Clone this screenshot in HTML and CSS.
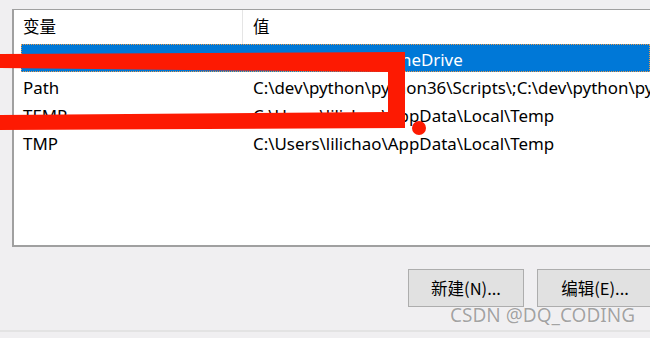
FILE: index.html
```html
<!DOCTYPE html>
<html lang="zh-CN">
<head>
<meta charset="utf-8">
<title>环境变量</title>
<link rel="stylesheet" href="styles.css">
</head>
<body>
<div class="window">
  <div class="list">
    <div class="header">
      <div class="hcell c1">变量</div>
      <div class="hcell c2">值</div>
    </div>
    <div class="rows">
      <div class="row sel"><div class="cell c1">OneDrive</div><div class="cell c2">C:\Users\lilichao\OneDrive</div></div>
      <div class="row"><div class="cell c1">Path</div><div class="cell c2">C:\dev\python\python36\Scripts\;C:\dev\python\py</div></div>
      <div class="row"><div class="cell c1">TEMP</div><div class="cell c2">C:\Users\lilichao\AppData\Local\Temp</div></div>
      <div class="row"><div class="cell c1">TMP</div><div class="cell c2">C:\Users\lilichao\AppData\Local\Temp</div></div>
    </div>
  </div>
  <div class="actions">
    <button class="btn">新建(N)...</button>
    <button class="btn">编辑(E)...</button>
  </div>
  <div class="footer"></div>
</div>
<svg class="marks" width="650" height="338" viewBox="0 0 650 338">
  <polygon points="0,54 405,52 405,128 0,130 0,115 388,112 388,72 0,68" fill="#fd1a02"/>
  <circle cx="419" cy="128" r="7" fill="#fd1a02"/>
</svg>
<div class="watermark">CSDN @DQ_CODING</div>
</body>
</html>
```
FILE: styles.css
```css
html, body {
  margin: 0;
  width: 650px;
  height: 338px;
  overflow: hidden;
  background: #f0eff1;
  font-family: "Noto Sans", "Noto Sans CJK SC", sans-serif;
  color: #000;
}
.window {
  display: flex;
  flex-direction: column;
  padding: 9px 0 0 12px;
}
.list {
  height: 238px;
  box-sizing: border-box;
  background: #fff;
  border-left: 2px solid #a0a0a0;
  border-top: 1px solid #a0a0a0;
  border-bottom: 2px solid #a0a0a0;
  overflow: hidden;
}
.header {
  display: flex;
  height: 34px;
  font-size: 16.5px;
  line-height: 32px;
  font-family: "Noto Sans CJK SC", sans-serif;
}
.hcell.c1 {
  width: 229px;
  box-sizing: border-box;
  padding-left: 9px;
  border-right: 1px solid #e5e5e5;
}
.hcell.c2 {
  padding-left: 10px;
}
.rows {
  padding-left: 7px;
}
.row {
  display: flex;
  height: 28px;
  line-height: 31px;
  font-size: 16.9px;
  white-space: nowrap;
}
.row .c1 {
  flex: none;
  width: 221px;
  box-sizing: border-box;
  padding-left: 2px;
}
.row .c2 {
  padding-left: 11px;
}
.row.sel {
  background: #0078d7;
  color: #fff;
  outline: 1px dotted #e89a4a;
  outline-offset: -1px;
}
.actions {
  display: flex;
  gap: 13px;
  margin-top: 22px;
  padding-left: 396px;
}
.btn {
  flex: none;
  width: 116px;
  height: 38px;
  margin: 0;
  padding: 0;
  background: #e1e1e1;
  border: 1px solid #adadad;
  font-family: "Noto Sans CJK SC", sans-serif;
  font-size: 16.5px;
  color: #000;
}
.footer {
  margin: 23px 0 0 -12px;
  height: 8px;
  border-top: 2px solid #e3e3e3;
}
.marks {
  position: absolute;
  left: 0;
  top: 0;
  pointer-events: none;
}
.watermark {
  position: absolute;
  left: 450px;
  top: 306px;
  font-family: "Noto Sans", sans-serif;
  font-size: 19px;
  line-height: 19px;
  color: #a3a3a3;
  text-shadow: 0 0 1px #fff, 0 0 1px #fff;
  white-space: nowrap;
}
```
